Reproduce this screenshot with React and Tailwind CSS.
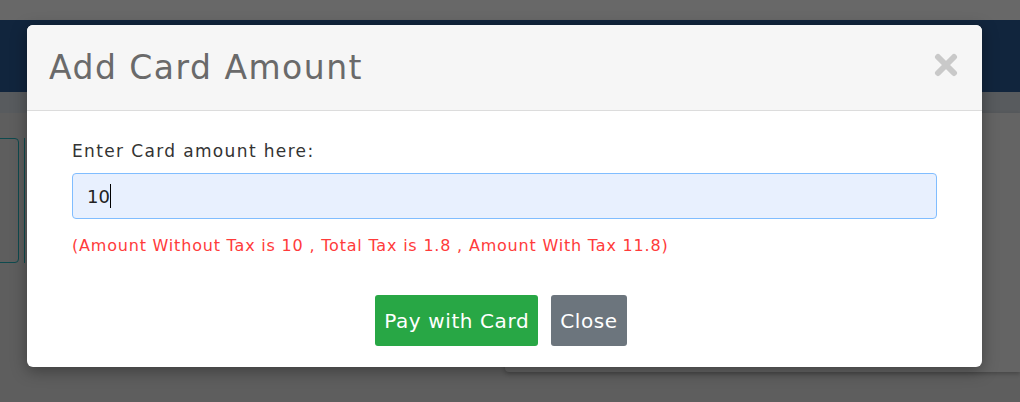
import React from 'react';

const CloseIcon = () => (
  <svg width="24" height="24" viewBox="0 0 24 24" className="block">
    <path d="M4 4 L20 20 M20 4 L4 20" stroke="#c9c9c9" strokeWidth="6" strokeLinecap="round" />
  </svg>
);

function App() {
  return (
    <div className="relative w-[1020px] h-[402px] overflow-hidden bg-[#5e5e5e] font-['DejaVu_Sans',sans-serif]">
      {/* page behind the modal */}
      <div className="h-[20px] bg-[#686868]" />
      <div className="h-[72px] bg-[#11253d]" />
      <div className="h-[21px] bg-[#585b5e]" />
      <div className="flex">
        <div className="w-[483px] pt-[25px]">
          <div className="flex gap-[5px]">
            <div className="w-[21px] h-[125px] -ml-[2px] border border-[#0e4a4e] rounded-r-[4px]" />
            <div className="w-[6px] h-[125px] border-l border-[#0e4a4e]" />
          </div>
        </div>
        <div className="flex-1 flex flex-col">
          <div className="ml-[22px] h-[259px] bg-[#646464] rounded-bl-[4px] shadow-[0_2px_4px_rgba(0,0,0,0.25)]" />
          <div className="flex-1 bg-[#53575b]" />
        </div>
      </div>

      {/* modal */}
      <div className="absolute left-[27px] top-[25px] w-[955px] h-[342px] bg-white rounded-[6px] overflow-hidden shadow-[0_4px_16px_rgba(0,0,0,0.35)]">
        <div className="h-[86px] bg-[#f6f6f6] border-b border-[#dcdcdc] flex items-center justify-between pl-[22px] pr-[24px]">
          <h2 className="text-[33px] font-normal tracking-[0.045em] text-[#6a6a6a] leading-none pb-[1px]">Add Card Amount</h2>
          <button className="mb-[6px]"><CloseIcon /></button>
        </div>
        <div className="px-[45px] pt-[28px]">
          <label className="block text-[17px] leading-[25px] tracking-[0.08em] text-[#333]">Enter Card amount here:</label>
          <div className="mt-[9px] h-[46px] bg-[#e8f0fe] border border-[#80bdff] rounded-[4px] flex items-center pl-[14px] text-[18px] text-[#222]">
            10<span className="inline-block w-px h-[24px] bg-black" />
          </div>
          <p className="mt-[14px] text-[16px] leading-[25px] tracking-[0.05em] text-[#ff3b3b]">
            (Amount Without Tax is 10 , Total Tax is 1.8 , Amount With Tax 11.8)
          </p>
          <div className="mt-[37px] pr-[7px] flex justify-center gap-[13px]">
            <button className="h-[51px] px-[9px] bg-[#28a745] text-white text-[20px] tracking-[0.03em] font-medium rounded-[3px]">Pay with Card</button>
            <button className="h-[51px] px-[9px] bg-[#6c757d] text-white text-[20px] tracking-[0.03em] font-medium rounded-[3px]">Close</button>
          </div>
        </div>
      </div>
    </div>
  );
}

export default App;
